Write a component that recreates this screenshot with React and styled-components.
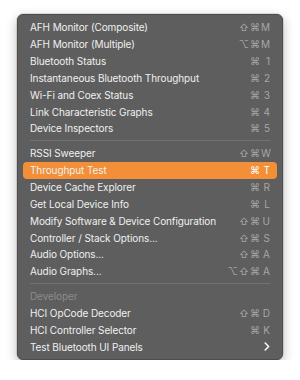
import styled, { createGlobalStyle } from 'styled-components';

const Global = createGlobalStyle`
  body {
    margin: 0;
    background: #ffffff;
    font-family: "Inter", "DejaVu Sans", sans-serif;
  }
`;

const Page = styled.div`
  padding: 14px 17px 0 17px;
`;

const Menu = styled.div`
  width: 266px;
  box-sizing: border-box;
  padding: 4px 5px;
  background: #5e5e5e;
  border: 1px solid #4c4c4c;
  border-radius: 6px;
  box-shadow: 0 4px 12px rgba(0, 0, 0, 0.28), 0 0 0 0.5px rgba(0, 0, 0, 0.2);
`;

const Item = styled.div`
  display: flex;
  align-items: center;
  justify-content: space-between;
  height: 16.85px;
  padding: 0 7px;
  border-radius: 4px;
  font-size: 10px;
  letter-spacing: -0.1px;
  color: ${(p) => (p.$disabled ? '#8c8c8c' : '#f0f0f0')};
  background: ${(p) => (p.$active ? '#f28f38' : 'transparent')};
`;

const Label = styled.span`
  white-space: nowrap;
`;

const Shortcut = styled.span`
  display: flex;
  align-items: center;
  font-size: 10px;
  letter-spacing: 0;
  color: ${(p) => (p.$active ? '#ffffff' : '#a6a6a6')};
`;

const Mods = styled.span`
  letter-spacing: 1px;
`;

const Key = styled.span`
  display: inline-block;
  width: 9px;
  text-align: right;
`;

const Separator = styled.div`
  height: 8px;
  display: flex;
  align-items: center;
  padding: 0 7px;

  &::after {
    content: '';
    flex: 1;
    height: 1px;
    background: #727272;
  }
`;

const Chevron = () => (
  <svg width="6" height="9" viewBox="0 0 6 9">
    <path d="M1.2 1 L4.6 4.5 L1.2 8" fill="none" stroke="#f4f4f4" strokeWidth="1.6" strokeLinecap="round" strokeLinejoin="round" />
  </svg>
);

const groups = [
  [
    ['AFH Monitor (Composite)', '⇧⌘', 'M'],
    ['AFH Monitor (Multiple)', '⌥⌘', 'M'],
    ['Bluetooth Status', '⌘', '1'],
    ['Instantaneous Bluetooth Throughput', '⌘', '2'],
    ['Wi-Fi and Coex Status', '⌘', '3'],
    ['Link Characteristic Graphs', '⌘', '4'],
    ['Device Inspectors', '⌘', '5'],
  ],
  [
    ['RSSI Sweeper', '⇧⌘', 'W'],
    ['Throughput Test', '⌘', 'T', 'active'],
    ['Device Cache Explorer', '⌘', 'R'],
    ['Get Local Device Info', '⌘', 'L'],
    ['Modify Software & Device Configuration', '⇧⌘', 'U'],
    ['Controller / Stack Options...', '⇧⌘', 'S'],
    ['Audio Options...', '⇧⌘', 'A'],
    ['Audio Graphs...', '⌥⇧⌘', 'A'],
  ],
  [
    ['Developer', '', '', 'disabled'],
    ['HCI OpCode Decoder', '⇧⌘', 'D'],
    ['HCI Controller Selector', '⌘', 'K'],
    ['Test Bluetooth UI Panels', '', '', 'submenu'],
  ],
];

export default function App() {
  return (
    <Page>
      <Global />
      <Menu>
        {groups.map((group, gi) => (
          <div key={gi}>
            {gi > 0 && <Separator />}
            {group.map(([label, mods, key, state]) => (
              <Item key={label} $active={state === 'active'} $disabled={state === 'disabled'}>
                <Label>{label}</Label>
                {state === 'submenu' ? (
                  <Chevron />
                ) : (
                  key && (
                    <Shortcut $active={state === 'active'}>
                      <Mods>{mods}</Mods>
                      <Key>{key}</Key>
                    </Shortcut>
                  )
                )}
              </Item>
            ))}
          </div>
        ))}
      </Menu>
    </Page>
  );
}
